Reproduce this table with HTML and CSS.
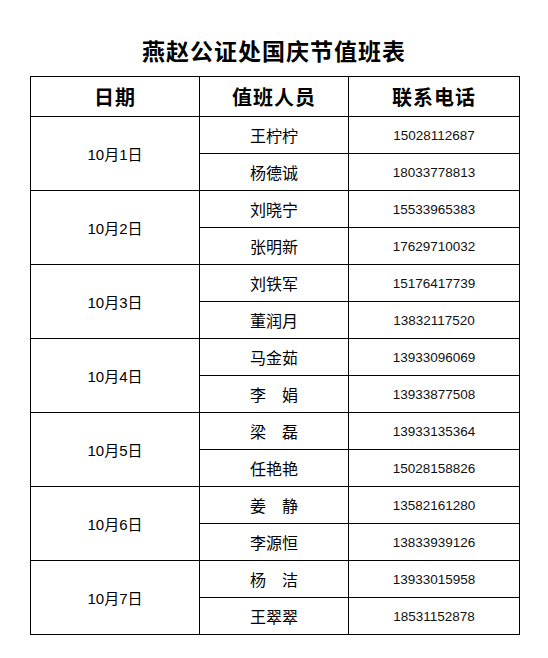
FILE: index.html
```html
<!DOCTYPE html>
<html lang="zh-CN">
<head>
<meta charset="utf-8">
<title>燕赵公证处国庆节值班表</title>
<link rel="stylesheet" href="styles.css">
</head>
<body>
<div class="page">
  <h1 class="title">燕赵公证处国庆节值班表</h1>
  <table class="duty">
    <colgroup>
      <col class="c-date"><col class="c-name"><col class="c-phone">
    </colgroup>
    <thead>
      <tr><th>日期</th><th>值班人员</th><th>联系电话</th></tr>
    </thead>
    <tbody>
      <tr><td class="date" rowspan="2">10月1日</td><td class="name">王柠柠</td><td class="phone">15028112687</td></tr>
      <tr><td class="name">杨德诚</td><td class="phone">18033778813</td></tr>
      <tr><td class="date" rowspan="2">10月2日</td><td class="name">刘晓宁</td><td class="phone">15533965383</td></tr>
      <tr><td class="name">张明新</td><td class="phone">17629710032</td></tr>
      <tr><td class="date" rowspan="2">10月3日</td><td class="name">刘铁军</td><td class="phone">15176417739</td></tr>
      <tr><td class="name">董润月</td><td class="phone">13832117520</td></tr>
      <tr><td class="date" rowspan="2">10月4日</td><td class="name">马金茹</td><td class="phone">13933096069</td></tr>
      <tr><td class="name">李　娟</td><td class="phone">13933877508</td></tr>
      <tr><td class="date" rowspan="2">10月5日</td><td class="name">梁　磊</td><td class="phone">13933135364</td></tr>
      <tr><td class="name">任艳艳</td><td class="phone">15028158826</td></tr>
      <tr><td class="date" rowspan="2">10月6日</td><td class="name">姜　静</td><td class="phone">13582161280</td></tr>
      <tr><td class="name">李源恒</td><td class="phone">13833939126</td></tr>
      <tr><td class="date" rowspan="2">10月7日</td><td class="name">杨　洁</td><td class="phone">13933015958</td></tr>
      <tr><td class="name">王翠翠</td><td class="phone">18531152878</td></tr>
    </tbody>
  </table>
</div>
</body>
</html>
```
FILE: styles.css
```css
html, body {
  margin: 0;
  padding: 0;
  background: #ffffff;
}
.page {
  width: 548px;
  height: 658px;
  font-family: "Noto Sans CJK SC", "Liberation Sans", sans-serif;
  color: #000;
}
.title {
  margin: 0;
  padding-top: 35px;
  height: 30px;
  line-height: 30px;
  font-size: 23px;
  font-weight: bold;
  text-align: center;
  letter-spacing: 1px;
}
.duty {
  margin: 11px 0 0 30px;
  border-collapse: collapse;
  table-layout: fixed;
  width: 489px;
}
.c-date { width: 169px; }
.c-name { width: 149px; }
.c-phone { width: 171px; }
.duty th, .duty td {
  border: 1px solid #000;
  padding: 0;
  text-align: center;
  vertical-align: middle;
}
.duty th {
  height: 39px;
  font-size: 20px;
  font-weight: bold;
  letter-spacing: 1px;
}
.duty td {
  height: 36px;
}
.date {
  font-size: 15px;
  font-family: "Liberation Sans", "Noto Sans CJK SC", sans-serif;
}
.name {
  font-size: 16px;
}
.phone {
  font-family: "Liberation Sans", sans-serif;
  font-size: 13.5px;
  color: #111;
}
```
